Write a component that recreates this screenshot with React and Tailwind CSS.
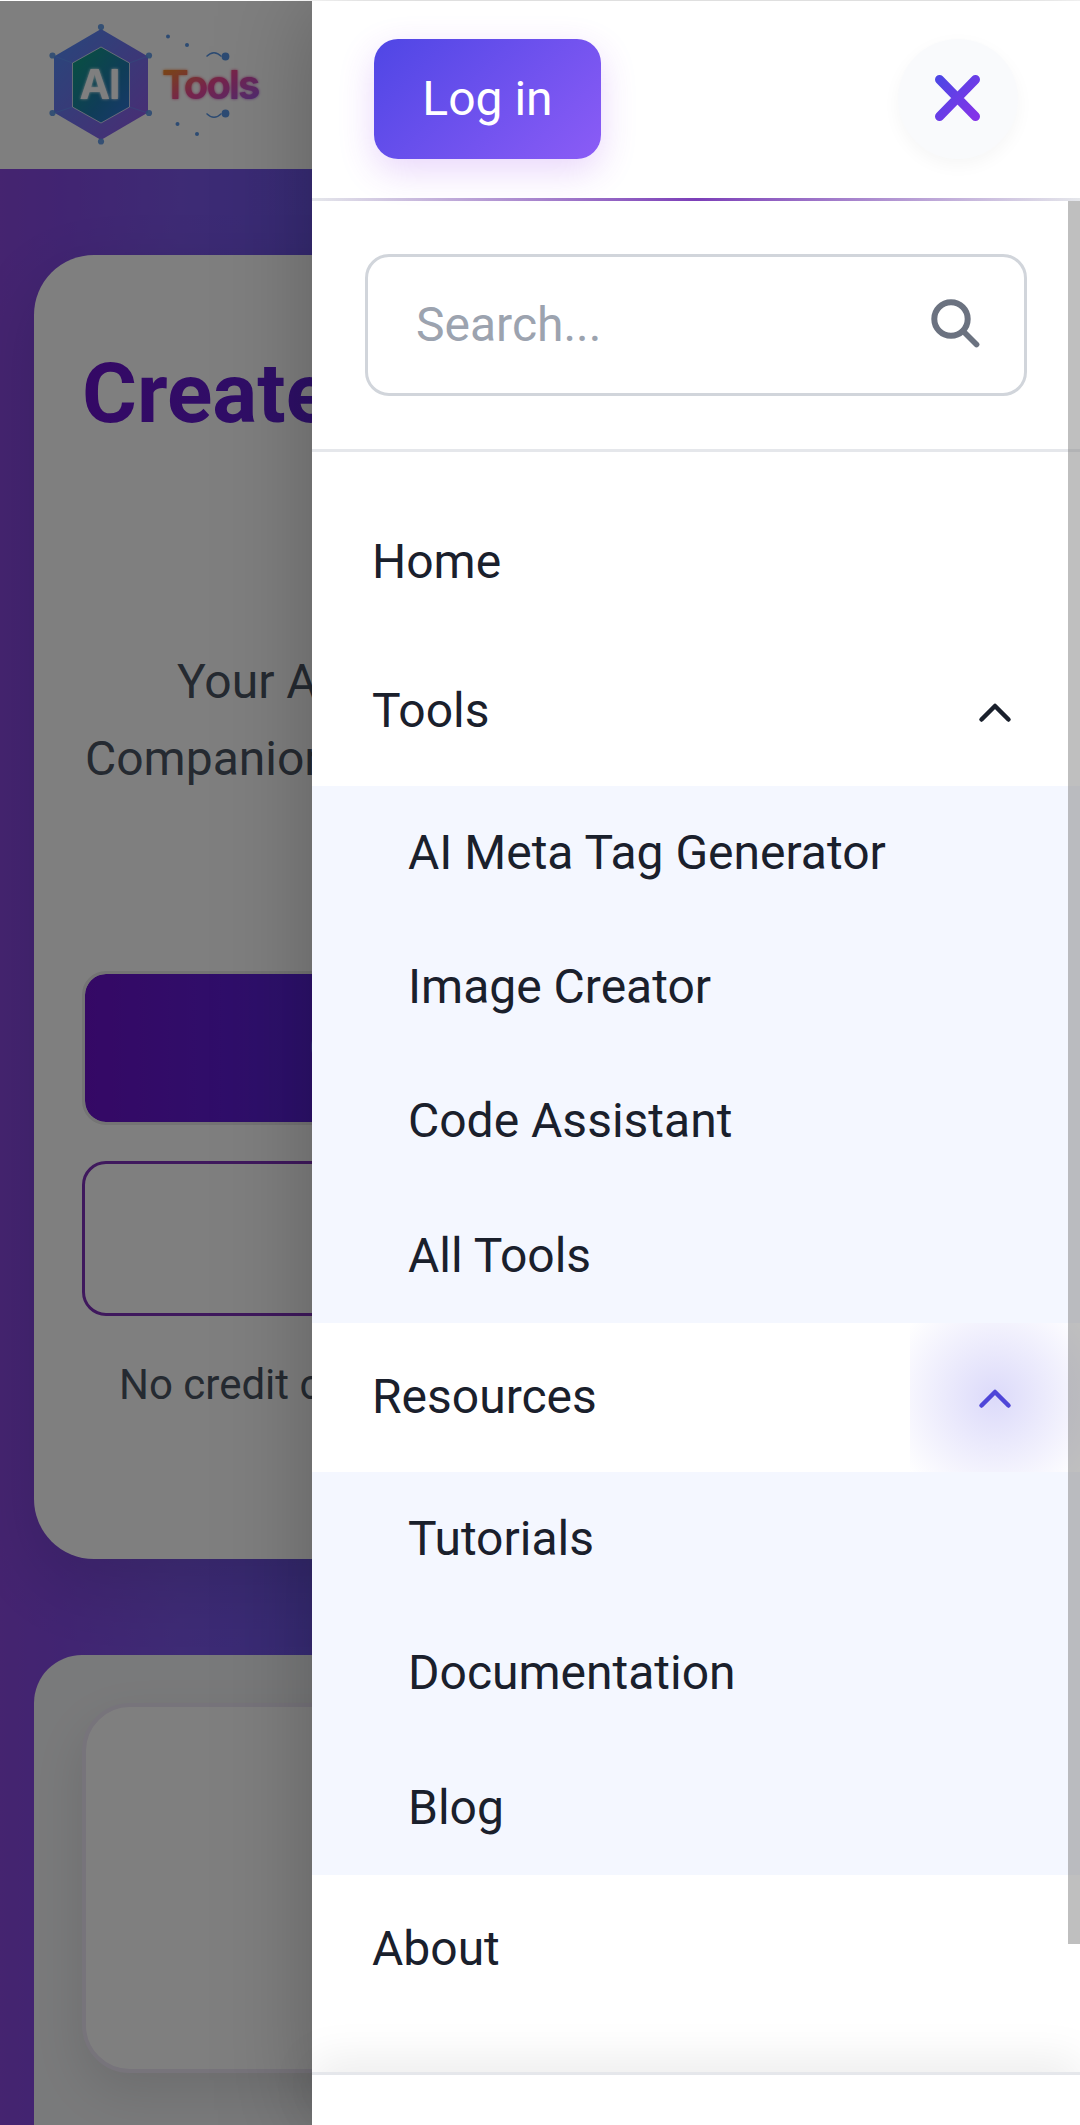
import React from "react";

const HEX_DOTS = [
  [101, 27],
  [149, 55.500],
  [149, 113],
  [101, 141.500],
  [52.500, 113],
  [52.500, 55.500],
];

function Logo() {
  return (
    <svg className="block h-[168px] w-[312px]" viewBox="0 1 312 168" fill="none">
      <defs>
        <linearGradient id="outer" x1="0" y1="0" x2="1" y2="1">
          <stop offset="0" stopColor="#3b82f6" />
          <stop offset="1" stopColor="#8b45e6" />
        </linearGradient>
        <linearGradient id="inner" x1="0" y1="0" x2="1" y2="1">
          <stop offset="0" stopColor="#10a37f" />
          <stop offset="0.6" stopColor="#1f7ab0" />
          <stop offset="1" stopColor="#3273dc" />
        </linearGradient>
        <linearGradient id="word" x1="0" y1="0" x2="1" y2="1">
          <stop offset="0" stopColor="#f59e0b" />
          <stop offset="0.5" stopColor="#ec4899" />
          <stop offset="1" stopColor="#8b5cf6" />
        </linearGradient>
        <filter id="glow" x="-30%" y="-30%" width="160%" height="160%">
          <feGaussianBlur stdDeviation="1.700" result="b" />
          <feMerge>
            <feMergeNode in="b" />
            <feMergeNode in="SourceGraphic" />
          </feMerge>
        </filter>
      </defs>
      <path d="M101 29L148 56.500V112.500L101 140L54 112.500V56.500Z" fill="url(#outer)" opacity="0.9" />
      <path d="M54 56L72.500 63M148 56L129.500 63M54 113L72.500 107M148 113L129.500 107" stroke="#60a5fa" strokeOpacity="0.45" />
      <path d="M101 47L129.500 63V107L101 123L72.500 107V63Z" fill="url(#inner)" stroke="#ffffff" strokeOpacity="0.7" />
      {HEX_DOTS.map(([x, y]) => (
        <circle key={`${x}-${y}`} cx={x} cy={y} r="3.100" fill="#5a97e6" fillOpacity="0.9" />
      ))}
      <text x="100" y="99" textAnchor="middle" textLength="41" fontSize="41" fontWeight="700" fill="#fff" filter="url(#glow)" fontFamily="Inter, sans-serif">AI</text>
      <text x="162" y="99" textLength="98.500" fontSize="40" fontWeight="700" fill="url(#word)" filter="url(#glow)" fontFamily="Inter, sans-serif">Tools</text>
      <g fill="#5a97e6">
        <circle cx="168" cy="36.500" r="2" />
        <circle cx="187" cy="45" r="2" />
        <circle cx="177.500" cy="124" r="2" />
        <circle cx="197" cy="134" r="2" />
        <circle cx="225.500" cy="56.500" r="3.900" />
        <circle cx="225.500" cy="113.500" r="3.900" />
      </g>
      <path d="M206.500 56.500Q214 49 221.500 56.500M206.500 113.500Q214 121 221.500 113.500" stroke="#5a97e6" strokeWidth="1.300" />
    </svg>
  );
}

function Backdrop() {
  return (
    <div className="relative flex h-[2125px] w-[1080px] shrink-0 flex-col">
      <div className="h-[169px] shrink-0 bg-white pt-px">
        <Logo />
      </div>
      <main className="h-[1956px] bg-[linear-gradient(90deg,#8a48e0_0px,#8349e4_60px,#7c56ea_180px,#7058ec_312px)] px-[34px] pt-[86px]">
        <section className="h-[1304px] overflow-hidden rounded-[60px] bg-white px-[48px] pt-[94px] shadow-[0_24px_72px_rgba(0,0,0,0.12)]">
          <h1 className="h-[294px] whitespace-nowrap text-[84px] leading-[90px] font-bold text-[#5b21b6]">
            <span className="bg-[linear-gradient(100deg,#6a11cb_0px,#5b21d0_250px,#4a25cf_500px)] bg-clip-text text-transparent">Create</span>
          </h1>
          <p className="h-[329px] text-[48px] leading-[77px] whitespace-nowrap text-[#4b5563]">
            <span className="block pl-[95px]">Your AI</span>
            <span className="block pl-[3px]">Companion</span>
          </p>
          <div className="-mt-px flex h-[154px] w-[920px] items-center rounded-[24px] border-[3px] border-[#e8e8e8] bg-[linear-gradient(90deg,#6a11cb_0px,#5b21d8_200px,#4f26dc_400px)] bg-clip-padding pl-[224px] text-[48px] text-white">
            Get Started
          </div>
          <div className="mt-[36px] h-[155px] w-[920px] rounded-[24px] border-[3px] border-[#7e30ba]" />
          <p className="mt-[39px] pl-[37px] text-[42px] leading-[60px] whitespace-nowrap text-[#4b5563]">No credit card</p>
        </section>
        <section className="mt-[96px] h-[600px] rounded-t-[48px] bg-[#f3f4f6] px-[48px] pt-[48px]">
          <div className="h-[370px] rounded-[48px] border-[4px] border-[#efe8f6] bg-white shadow-[0_20px_50px_rgba(0,0,0,0.1)]" />
        </section>
      </main>
      <div className="absolute inset-x-0 top-px bottom-0 bg-black/50" />
    </div>
  );
}

function Chevron({ className }) {
  return (
    <svg className={`h-[48px] w-[48px] ${className}`} viewBox="0 0 48 48" fill="none" stroke="currentColor" strokeWidth="4.500" strokeLinecap="round" strokeLinejoin="round">
      <path d="M10.500 30.500L24 17L37.500 30.500" />
    </svg>
  );
}

function Row({ label, open, active }) {
  return (
    <div className="flex h-[149px] items-center justify-between">
      <span className="pb-[2px] pl-[60px]">{label}</span>
      {open && (
        <span className={active
          ? "flex h-full w-[170px] items-center justify-center bg-[radial-gradient(circle_at_center,rgba(79,70,229,0.2)_0%,transparent_113px)] text-[#4f46d8]"
          : "flex h-full w-[170px] items-center justify-center"}>
          <Chevron className="mt-[3px]" />
        </span>
      )}
    </div>
  );
}

function SubMenu({ items }) {
  return (
    <ul className="bg-[#f4f7ff]">
      {items.map((item) => (
        <li key={item} className="flex h-[134.340px] items-center pb-[0.8px] pl-[96px]">{item}</li>
      ))}
    </ul>
  );
}

function Drawer() {
  return (
    <aside className="absolute top-px right-0 bottom-0 flex w-[768px] flex-col bg-white text-[48px] leading-[72px] text-[#1a202c] shadow-[0_0_90px_rgba(0,0,0,0.25)]">
      <header className="flex h-[197px] shrink-0 items-center justify-between pr-[62px] pb-[2px] pl-[62px]">
        <button className="h-[120px] w-[227px] rounded-[24px] bg-[linear-gradient(135deg,#4f46e5,#8b5cf6)] text-white shadow-[0_12px_36px_rgba(147,51,234,0.2)]">Log in</button>
        <button className="flex h-[120px] w-[120px] items-center justify-center rounded-full bg-[#f9fafc] shadow-[0_6px_18px_rgba(0,0,0,0.04)]">
          <svg className="h-[72px] w-[72px]" viewBox="0 0 72 72" fill="none">
            <defs>
              <linearGradient id="cross" x1="0" y1="0" x2="1" y2="1">
                <stop offset="0" stopColor="#4f46e5" />
                <stop offset="1" stopColor="#8434e8" />
              </linearGradient>
            </defs>
            <path d="M17.500 16.500L53.500 53.500M53.500 16.500L17.500 53.500" stroke="url(#cross)" strokeWidth="9" strokeLinecap="round" />
          </svg>
        </button>
      </header>
      <div className="h-[3px] shrink-0 bg-[linear-gradient(90deg,#e5e7eb,#7c3fb8_50%,#e5e7eb)]" />
      <div className="relative flex grow flex-col">
        <div className="h-[251px] shrink-0 border-b-[3px] border-[#e5e7eb] px-[53px] pt-[53px]">
          <div className="flex h-[142px] items-center justify-between rounded-[24px] border-[3px] border-[#d1d5db] pr-[44px] pl-[48px] text-[#9ca3af]">
            <span>Search...</span>
            <svg className="mb-[4px] h-[49px] w-[49px]" viewBox="0 0 49 49" fill="none" stroke="#6b7280" strokeLinecap="round">
              <circle cx="20" cy="20" r="16.700" strokeWidth="6" />
              <path d="M32 32L45.500 45.500" strokeWidth="5.700" />
            </svg>
          </div>
        </div>
        <nav className="h-[1620px] shrink-0 pt-[36px]">
          <Row label="Home" />
          <Row label="Tools" open />
          <SubMenu items={["AI Meta Tag Generator", "Image Creator", "Code Assistant", "All Tools"]} />
          <Row label="Resources" open active />
          <SubMenu items={["Tutorials", "Documentation", "Blog"]} />
          <Row label="About" />
        </nav>
        <div className="grow border-t-[3px] border-[#e5e7eb] bg-white shadow-[0_-12px_45px_rgba(0,0,0,0.08)]" />
        <div className="absolute top-0 right-0 h-[1743px] w-[12px] bg-[rgba(128,128,128,0.5)]" />
      </div>
    </aside>
  );
}

export default function App() {
  return (
    <div className="relative h-[2125px] w-[1080px] overflow-hidden bg-white font-[Roboto,sans-serif]">
      <Backdrop />
      <Drawer />
    </div>
  );
}
